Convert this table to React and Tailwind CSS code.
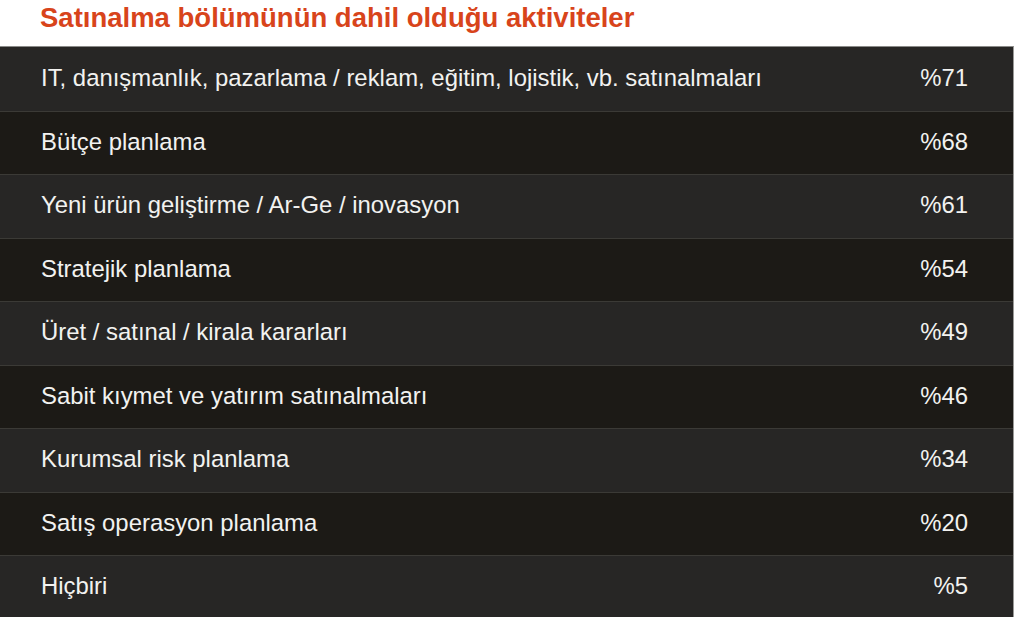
const rows = [
  ['IT, danışmanlık, pazarlama / reklam, eğitim, lojistik, vb. satınalmaları', '%71'],
  ['Bütçe planlama', '%68'],
  ['Yeni ürün geliştirme / Ar-Ge / inovasyon', '%61'],
  ['Stratejik planlama', '%54'],
  ['Üret / satınal / kirala kararları', '%49'],
  ['Sabit kıymet ve yatırım satınalmaları', '%46'],
  ['Kurumsal risk planlama', '%34'],
  ['Satış operasyon planlama', '%20'],
  ['Hiçbiri', '%5'],
];

export default function App() {
  return (
    <div className="w-[1016px] h-[617px] overflow-hidden bg-white font-['Liberation_Sans',Arial,sans-serif]">
      <h2 className="h-[46px] pl-[40px] pt-[1px] text-[27.5px] font-bold leading-[34px] text-[#d8441b]">
        Satınalma bölümünün dahil olduğu aktiviteler
      </h2>
      <div className="w-[1014px] border-t border-[#8a8a88] border-r border-r-[#9a9a98]">
        {rows.map(([label, value], i) => (
          <div
            key={label}
            className={
              'flex h-[63.5px] items-center justify-between pl-[41px] pr-[45px] pb-[2px] text-[23.9px] text-[#f2f2f0] ' +
              (i % 2 === 0 ? 'bg-[#272625]' : 'bg-[#1c1a16]') +
              (i > 0 ? ' border-t border-[#3b3a36]' : '')
            }
          >
            <span>{label}</span>
            <span>{value}</span>
          </div>
        ))}
      </div>
    </div>
  );
}
